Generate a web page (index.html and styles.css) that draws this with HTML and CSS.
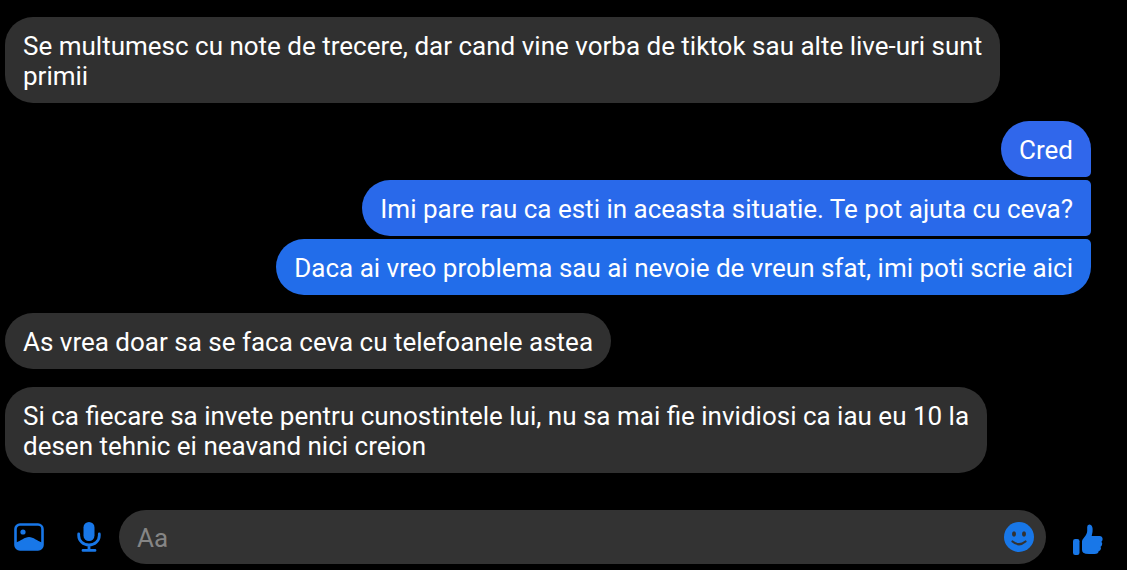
FILE: index.html
```html
<!DOCTYPE html>
<html lang="ro">
<head>
<meta charset="utf-8">
<meta name="viewport" content="width=device-width, initial-scale=1">
<title>Chat</title>
<link rel="stylesheet" href="styles.css">
</head>
<body>
<main class="chat">
  <section class="messages" aria-label="Mesaje">
    <p class="bubble received">Se multumesc cu note de trecere, dar cand vine vorba de tiktok sau alte live-uri sunt<br>primii</p>
    <div class="sent-group">
      <p class="bubble sent sent-first">Cred</p>
      <p class="bubble sent sent-middle">Imi pare rau ca esti in aceasta situatie. Te pot ajuta cu ceva?</p>
      <p class="bubble sent sent-last">Daca ai vreo problema sau ai nevoie de vreun sfat, imi poti scrie aici</p>
    </div>
    <p class="bubble received">As vrea doar sa se faca ceva cu telefoanele astea</p>
    <p class="bubble received">Si ca fiecare sa invete pentru cunostintele lui, nu sa mai fie invidiosi ca iau eu 10 la<br>desen tehnic ei neavand nici creion</p>
  </section>
  <form class="composer">
    <button class="icon-button" type="button" aria-label="Galerie">
      <svg width="30" height="28" viewBox="0 0 30 28">
        <rect x="1.5" y="1.5" width="27" height="25" rx="4.5" fill="none" stroke="currentColor" stroke-width="2.6"/>
        <circle cx="9" cy="9" r="2.6" fill="currentColor"/>
        <path d="M2 19.500C7 18 10.500 14 15 14s8 4 13 5.500V23q0 3.500-3.500 3.500h-19Q2 26.500 2 23Z" fill="currentColor"/>
      </svg>
    </button>
    <button class="icon-button" type="button" aria-label="Microfon">
      <svg width="24" height="30" viewBox="0 0 24 30">
        <rect x="6.500" y="0" width="11" height="19" rx="5.500" fill="currentColor"/>
        <path d="M1.700 12v1.500a10.300 9.500 0 0 0 20.600 0V12M12 23v5M6 28.400h12" fill="none" stroke="currentColor" stroke-width="2.800" stroke-linecap="round"/>
      </svg>
    </button>
    <div class="field">
      <input class="field-input" type="text" placeholder="Aa" aria-label="Mesaj">
      <button class="icon-button" type="button" aria-label="Emoji">
        <svg width="30" height="30" viewBox="0 0 30 30">
          <circle cx="15" cy="15" r="15" fill="currentColor"/>
          <ellipse cx="10" cy="12" rx="2" ry="2.700" fill="#333"/>
          <ellipse cx="20" cy="12" rx="2" ry="2.700" fill="#333"/>
          <path d="M8.500 19.500Q15 25 21.500 19.500" fill="none" stroke="#333" stroke-width="2.200" stroke-linecap="round"/>
        </svg>
      </button>
    </div>
    <button class="icon-button like" type="button" aria-label="Apreciez">
      <svg width="30" height="32" viewBox="0 0 30 32">
        <rect x="0" y="15" width="6.500" height="16" rx="2.200" fill="currentColor"/>
        <path d="M9 17.500C9 14.500 14 12 14.200 7V3Q14.200.500 16.300.500C19.500.500 20 4.500 19.500 8L18.700 12H26.500Q29.800 12.300 29.600 15.300Q29.500 17 28.400 17.700Q29.700 19 29 21Q28.600 22.200 27.600 22.700Q28.500 24.500 27.400 26Q26.800 26.900 25.700 27.100Q25.600 30 21.500 30H16Q12 30 10.300 28.700Q9 27.800 9 25.800Z" fill="currentColor"/>
      </svg>
    </button>
  </form>
</main>
</body>
</html>
```
FILE: styles.css
```css
* {
  box-sizing: border-box;
}

body {
  margin: 0;
  background: #000;
  color: #fff;
  font-family: Roboto, "Liberation Sans", sans-serif;
  font-size: 26px;
  line-height: 30px;
}

.chat {
  display: flex;
  flex-direction: column;
  justify-content: space-between;
  min-height: 100vh;
  padding: 17px 0 6px;
}

.messages {
  display: flex;
  flex-direction: column;
  align-items: flex-start;
  gap: 18px;
  padding: 0 36px 0 5px;
}

.bubble {
  margin: 0;
  padding: 14px 18px 12px;
  border-radius: 28px;
}

.received {
  background: #303030;
}

.sent-group {
  display: flex;
  flex-direction: column;
  align-items: flex-end;
  align-self: stretch;
  gap: 3px;
}

.sent-first {
  background: #3067eb;
  border-bottom-right-radius: 5px;
}

.sent-middle {
  background: #2969ea;
  border-top-right-radius: 5px;
  border-bottom-right-radius: 5px;
}

.sent-last {
  background: #226dea;
  border-top-right-radius: 5px;
}

.composer {
  display: flex;
  align-items: center;
  padding: 0 24px 0 14px;
}

.icon-button {
  display: flex;
  flex: none;
  padding: 0;
  border: 0;
  background: none;
  color: #1877e8;
  cursor: pointer;
}

.icon-button + .icon-button {
  margin-left: 33px;
}

.field {
  display: flex;
  flex: 1;
  align-items: center;
  min-width: 0;
  height: 54px;
  margin: 0 27px 0 18px;
  padding: 0 12px 0 18px;
  border-radius: 27px;
  background: #333;
}

.field-input {
  flex: 1;
  min-width: 0;
  padding: 2px 0 0;
  border: 0;
  outline: 0;
  background: none;
  color: #fff;
  font: inherit;
}

.field-input::placeholder {
  color: #858585;
  opacity: 1;
}

.like {
  padding-top: 6px;
}
```
